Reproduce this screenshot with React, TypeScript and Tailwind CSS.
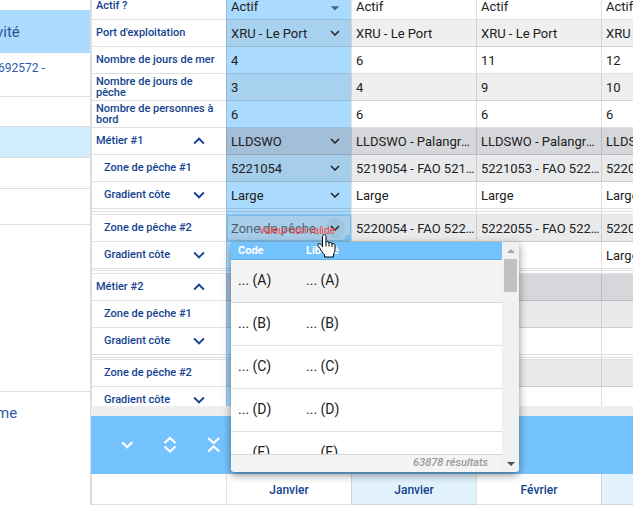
import React from "react";
import { MdArrowDropDown, MdExpandLess, MdExpandMore } from "react-icons/md";

type Kind = "plain" | "text" | "auto" | "select" | "invalid";
type Tone = "white" | "grey" | "metier" | "zone";

interface Row {
  id: string;
  label: string;
  sub?: boolean;
  toggle?: "up" | "down";
  kind: Kind;
  tone: Tone;
  value: string;
  others: string[];
}

interface Gap {
  id: string;
  gap: "short" | "tall";
}

const rows: (Row | Gap)[] = [
  { id: "actif", label: "Actif ?", kind: "select", tone: "white", value: "Actif", others: ["Actif", "Actif", "Actif"] },
  { id: "port", label: "Port d'exploitation", kind: "auto", tone: "grey", value: "XRU - Le Port", others: ["XRU - Le Port", "XRU - Le Port", "XRU - Le Port"] },
  { id: "mer", label: "Nombre de jours de mer", kind: "text", tone: "white", value: "4", others: ["6", "11", "12"] },
  { id: "peche", label: "Nombre de jours de pêche", kind: "text", tone: "grey", value: "3", others: ["4", "9", "10"] },
  { id: "bord", label: "Nombre de personnes à bord", kind: "text", tone: "white", value: "6", others: ["6", "6", "6"] },
  { id: "m1", label: "Métier #1", toggle: "up", kind: "auto", tone: "metier", value: "LLDSWO", others: ["LLDSWO - Palangres", "LLDSWO - Palangres", "LLDSWO - Palangres"] },
  { id: "m1z1", label: "Zone de pêche #1", sub: true, kind: "auto", tone: "zone", value: "5221054", others: ["5219054 - FAO 521954", "5221053 - FAO 522153", "5220054 - FAO 522054"] },
  { id: "m1g1", label: "Gradient côte", sub: true, toggle: "down", kind: "auto", tone: "white", value: "Large", others: ["Large", "Large", "Large"] },
  { id: "s1", gap: "tall" },
  { id: "s2", gap: "tall" },
  { id: "m1z2", label: "Zone de pêche #2", sub: true, kind: "invalid", tone: "zone", value: "", others: ["5220054 - FAO 522054", "5222055 - FAO 522255", "5220054 - FAO 522054"] },
  { id: "m1g2", label: "Gradient côte", sub: true, toggle: "down", kind: "plain", tone: "white", value: "", others: ["", "", "Large"] },
  { id: "s3", gap: "short" },
  { id: "s4", gap: "tall" },
  { id: "m2", label: "Métier #2", toggle: "up", kind: "plain", tone: "metier", value: "", others: ["", "", ""] },
  { id: "m2z1", label: "Zone de pêche #1", sub: true, kind: "plain", tone: "zone", value: "", others: ["", "", ""] },
  { id: "m2g1", label: "Gradient côte", sub: true, toggle: "down", kind: "plain", tone: "white", value: "", others: ["", "", ""] },
  { id: "s5", gap: "tall" },
  { id: "s6", gap: "short" },
  { id: "m2z2", label: "Zone de pêche #2", sub: true, kind: "plain", tone: "zone", value: "", others: ["", "", ""] },
  { id: "m2g2", label: "Gradient côte", sub: true, toggle: "down", kind: "plain", tone: "white", value: "", others: ["", "", ""] },
];

const toneClass: Record<Tone, string> = {
  white: "bg-white",
  grey: "bg-[#efefef]",
  metier: "bg-[#d6d7db] pr-1",
  zone: "bg-[#e9eaec]",
};

const activeTone: Record<Tone, string> = {
  white: "bg-[#aadbff]",
  grey: "bg-[#a8d1f0]",
  metier: "bg-[#a3bed8]",
  zone: "bg-[#a6cde9]",
};

const line = "border-black/12";

function Columns() {
  return (
    <colgroup>
      <col className="w-[134px]" />
      <col className="w-[125px]" />
      <col className="w-[125px]" />
      <col className="w-[125px]" />
      <col className="w-[125px]" />
    </colgroup>
  );
}

function Editor({ row }: { row: Row }) {
  if (row.kind === "plain") return null;
  if (row.kind === "text") {
    return <input id={row.id} defaultValue={row.value} className="block w-full bg-transparent px-1 pt-px leading-5 outline-none" />;
  }
  if (row.kind === "select") {
    return (
      <div className="relative">
        <select id={row.id} className="block w-full appearance-none bg-transparent px-1 pt-px leading-5 outline-none">
          <option>{row.value}</option>
        </select>
        <MdArrowDropDown size={20} className="pointer-events-none absolute top-0.5 right-1.5 text-black/55" />
      </div>
    );
  }
  const invalid = row.kind === "invalid";
  return (
    <div className={invalid ? "relative flex h-[26px] items-center outline-1 -outline-offset-1 outline-[#74bbf2]" : "flex items-center"}>
      <input
        id={row.id}
        defaultValue={row.value}
        placeholder={invalid ? "Zone de pêche" : undefined}
        aria-invalid={invalid}
        className="min-w-0 flex-1 bg-transparent pt-px pl-1 leading-5 outline-none placeholder:text-black/55"
      />
      <button
        aria-label="Ouvrir la liste"
        className={invalid ? "mr-1.5 flex size-5 items-center justify-center rounded-full bg-black/4" : "mr-1.5 flex size-5 items-center justify-center"}
      >
        <MdExpandMore size={18} />
      </button>
      {invalid && (
        <>
          <span className="absolute top-2.5 left-8 text-[10px] leading-3 whitespace-nowrap text-[#f44336]">Valeur non valide</span>
          <span className="absolute right-0 bottom-0 size-1.5 bg-[#75c3fe]" />
        </>
      )}
    </div>
  );
}

function ActivityTable() {
  return (
    <table className="-mt-[7px] w-[635px] table-fixed border-separate border-spacing-0 border-l border-[#dddddd]">
      <Columns />
      <tbody>
        {rows.map((row) => {
          if ("gap" in row) {
            const h = row.gap === "tall" ? "h-[3px]" : "h-[2px]";
            return (
              <tr key={row.id} className={h}>
                <td className={`border-b p-0 ${line}`} />
                <td className={`border-b border-l bg-[#aadbff] p-0 ${line}`} />
                <td className={`border-b border-l p-0 ${line}`} />
                <td className={`border-b border-l p-0 ${line}`} />
                <td className={`border-b border-l p-0 ${line}`} />
              </tr>
            );
          }
          return (
            <tr key={row.id} className="h-[27px]">
              <th scope="row" className={`border-b p-0 text-left align-middle text-[11px] leading-[11px] font-medium text-[#14438f] ${line}`}>
                <div className={row.sub ? "flex items-center pl-3" : "flex items-center pl-1"}>
                  <label htmlFor={row.kind === "plain" ? undefined : row.id} className="flex-1 pr-2 pb-px">
                    {row.label}
                  </label>
                  {row.toggle && (
                    <button aria-label={row.toggle === "up" ? "Replier" : "Déplier"} className="-my-1 mr-4">
                      {row.toggle === "up" ? <MdExpandLess size={22} /> : <MdExpandMore size={22} />}
                    </button>
                  )}
                </div>
              </th>
              <td className={`border-b border-l p-0 align-middle ${activeTone[row.tone]} ${line}`}>
                <Editor row={row} />
              </td>
              {row.others.map((value, i) => (
                <td key={i} className={`truncate border-b border-l pt-px pb-0 pl-1 align-middle leading-5 ${toneClass[row.tone]} ${line}`}>
                  {value}
                </td>
              ))}
            </tr>
          );
        })}
      </tbody>
    </table>
  );
}

function Toolbar() {
  return (
    <div className="flex h-[58px] shrink-0 items-center gap-[19px] bg-[#75c3fe] pl-6 text-white">
      <button aria-label="Déplier">
        <svg viewBox="0 0 24 24" className="size-6" fill="none" stroke="currentColor" strokeWidth="2.3">
          <path d="M7.200 9.200l5 5 5-5" />
        </svg>
      </button>
      <button aria-label="Tout déplier">
        <svg viewBox="0 0 24 24" className="size-6" fill="none" stroke="currentColor" strokeWidth="2.2">
          <path d="M6.500 10l5.500-5 5.500 5M6.500 13.500l5.500 5 5.500-5" />
        </svg>
      </button>
      <button aria-label="Tout replier">
        <svg viewBox="0 0 24 24" className="size-6" fill="none" stroke="currentColor" strokeWidth="2.2">
          <path d="M7.200 5l5.500 5 5.500-5M7.200 18.500l5.500-5 5.500 5" />
        </svg>
      </button>
    </div>
  );
}

const months = ["Janvier", "Janvier", "Février", ""];

function MonthTable() {
  return (
    <table className="w-[635px] shrink-0 table-fixed border-separate border-spacing-0 border-l border-[#dddddd]">
      <Columns />
      <thead>
        <tr className="h-[31px] text-[12px] text-[#14438f]">
          <td className={`border-b p-0 ${line}`} />
          {months.map((m, i) => (
            <th key={i} scope="col" className={`border-b border-l px-0 pt-px pb-0 font-medium ${i % 2 ? "bg-[#e2f3fe]" : "bg-white"} ${line}`}>
              {m}
            </th>
          ))}
        </tr>
      </thead>
    </table>
  );
}

const options = ["A", "B", "C", "D", "E"];

function ZonePopup() {
  return (
    <div className="absolute top-[242px] left-[140px] flex h-[230px] w-72 overflow-hidden rounded-b bg-white shadow-[0_3px_8px_rgba(0,0,0,0.45)]">
      <div className="flex min-w-0 flex-1 flex-col">
        <div className="min-h-0 flex-1 overflow-hidden">
          <table className="w-full table-fixed border-separate border-spacing-0 text-left">
            <colgroup>
              <col className="w-[75px]" />
              <col />
            </colgroup>
            <thead>
              <tr className="h-[18px] bg-[#75c3fe] text-[11px] leading-4 text-white">
                <th className="border-b border-[#5fb0ec] py-0 pl-[7px] font-bold">Code</th>
                <th className="border-b border-[#5fb0ec] p-0 font-bold">Libellé</th>
              </tr>
            </thead>
            <tbody>
              {options.map((o, i) => (
                <tr key={o} className={i === 0 ? "h-[43px] bg-[#f4f4f4]" : "h-[43px]"}>
                  <td className={`border-b pt-0 pb-0.5 pl-[7px] text-[14px] ${line}`}>... ({o})</td>
                  <td className={`border-b px-0 pt-0 pb-0.5 text-[14px] ${line}`}>... ({o})</td>
                </tr>
              ))}
            </tbody>
          </table>
        </div>
        <div className={`h-[18px] shrink-0 border-t bg-[#f4f4f4] pr-3.5 text-right text-[11px] leading-4 font-medium text-[#999999] italic ${line}`}>
          63878 résultats
        </div>
      </div>
      <div className="flex w-[17px] shrink-0 flex-col items-center justify-between bg-[#f1f1f1]">
        <div className="flex flex-col items-center">
          <div className="flex h-[17px] items-center">
            <svg viewBox="0 0 8 4" className="h-1 w-2">
              <path d="M0 4l4-4 4 4z" fill="#a3a3a3" />
            </svg>
          </div>
          <div className="h-[33px] w-[13px] bg-[#c1c1c1]" />
        </div>
        <div className="flex h-[17px] items-center">
          <svg viewBox="0 0 8 4" className="h-1 w-2">
            <path d="M0 0l4 4 4-4z" fill="#505050" />
          </svg>
        </div>
      </div>
    </div>
  );
}

function HandCursor() {
  return (
    <svg viewBox="0 0 19 24" className="pointer-events-none absolute top-[234px] left-[226px] h-6 w-[19px]">
      <path
        d="M5.500 13V2.500C5.500 0 9 0 9 2.500V8.500C9.500 7 12 7.300 12 9C12.800 7.800 15 8.300 15 10C16 9 18 9.500 18 11.500V15.500C18 18 16.500 19.500 16.500 21V23H7.500V21C5.500 18.500 4 16.500 3 14.500C2.500 13 1 12.200 .8 11C.7 9.800 2.500 9.200 3.800 10.300L5.500 12Z"
        fill="#fff"
        stroke="#000"
        strokeWidth="1"
      />
      <path d="M9 8.500v4M12 9v3.500M15 10v3" stroke="#000" strokeWidth="1" />
    </svg>
  );
}

function Sidebar() {
  return (
    <nav className="flex w-[91px] shrink-0 flex-col overflow-hidden border-r border-[#dddddd] whitespace-nowrap text-[#2b5ca5]">
      <div className="h-2.5" />
      <a href="#activite" className="flex h-[43px] items-center bg-[#aadbff] pt-0.5 -indent-1 text-[15px] text-[#2a5490]">
        vité
      </a>
      <div className="h-11 border-b border-[#dddddd] pt-1.5 -indent-0.5 text-[12px] leading-[18px]">692572 -</div>
      <div className="h-[30px] border-b border-[#dddddd]" />
      <div className="h-[31px] border-b border-[#dddddd] bg-[#d2ecff]" />
      <div className="h-[31px] border-b border-[#dddddd]" />
      <div className="h-9 border-b border-[#dddddd]" />
      <div className="h-[167px] border-b border-[#dddddd]" />
      <a href="#programme" className="flex h-[43px] items-center -indent-1 text-[15px]">
        me
      </a>
    </nav>
  );
}

export default function App() {
  return (
    <div className="flex h-screen overflow-hidden bg-white font-[Roboto,sans-serif] text-[13px] text-[#212121]">
      <Sidebar />
      <main className="relative flex min-w-0 flex-1 flex-col overflow-hidden">
        <div className="min-h-0 flex-1 overflow-hidden">
          <ActivityTable />
        </div>
        <div className="h-2.5 shrink-0 bg-[#eeeeee]" />
        <Toolbar />
        <MonthTable />
        <ZonePopup />
        <HandCursor />
      </main>
    </div>
  );
}
